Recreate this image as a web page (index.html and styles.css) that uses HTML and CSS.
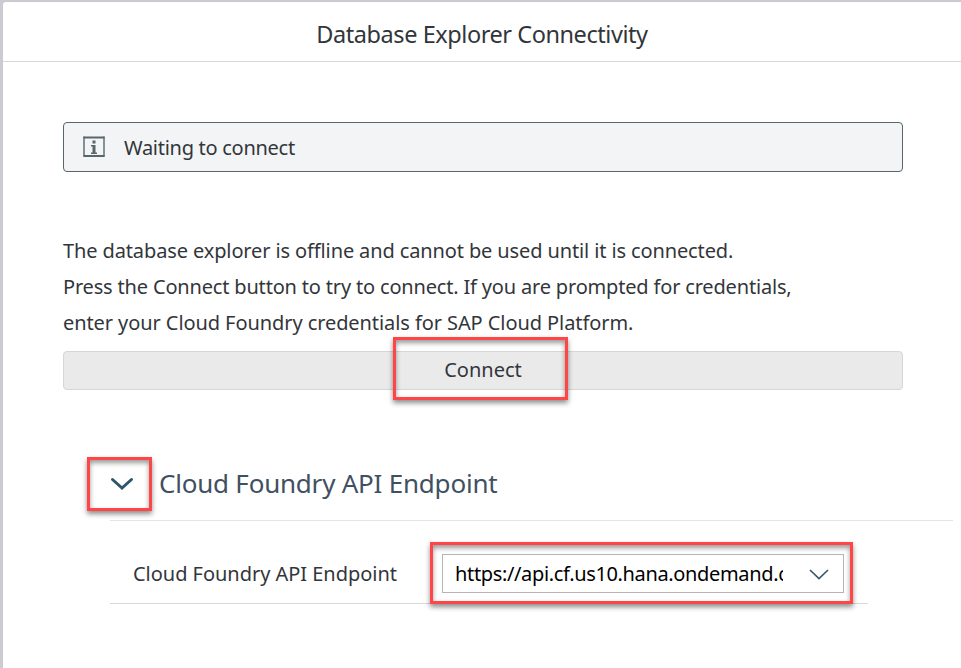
FILE: index.html
```html
<!DOCTYPE html>
<html lang="en">
<head>
<meta charset="utf-8">
<title>Database Explorer Connectivity</title>
<link rel="stylesheet" href="styles.css">
</head>
<body>
<main class="dialog">
  <header class="title"><h1>Database Explorer Connectivity</h1></header>
  <section class="content">
    <div class="strip">
      <svg class="info" viewBox="0 0 22 22" width="22" height="22"><path d="M1 .500v20M21 .500v20" stroke="#607078" stroke-width="1.500"/><path d="M.500 1.500h21M.500 20h21" stroke="#56666c" stroke-width="2"/><path d="M9.500 4.500h3v3h-3zM8 9h4.500v7.500H14V18H8v-1.500h1.500v-6H8z" fill="#56666c"/></svg>
      <span class="status">Waiting to connect</span>
    </div>
    <p class="message"><span class="l1">The database explorer is offline and cannot be used until it is connected.</span><br><span class="l2">Press the Connect button to try to connect. If you are prompted for credentials,</span><br><span class="l3">enter your Cloud Foundry credentials for SAP Cloud Platform.</span></p>
    <button class="connect"><span>Connect</span><i class="mark mark-connect"></i></button>
  </section>
  <section class="panel">
    <div class="panel-head">
      <button class="toggle"><svg width="24" height="14" viewBox="0 0 24 14"><path d="M2.500 2.500l9.500 8.500 9.500-8.500" fill="none" stroke="#2f566b" stroke-width="3" stroke-linecap="round"/></svg><i class="mark mark-toggle"></i></button>
      <h2>Cloud Foundry API Endpoint</h2>
    </div>
    <div class="row">
      <label>Cloud Foundry API Endpoint</label>
      <div class="select"><span class="value">https://api.cf.us10.hana.ondemand.com</span><svg width="20" height="12" viewBox="0 0 20 12"><path d="M1 2l9 8.500L19 2" fill="none" stroke="#36596e" stroke-width="1.700"/></svg><i class="mark mark-select"></i></div>
    </div>
  </section>
</main>
</body>
</html>
```
FILE: styles.css
```css
* { box-sizing: border-box; }
body { margin: 0; background: #caccd1; color: #32363a; font: 20px/36px "Noto Sans", sans-serif; overflow: hidden; }
h1, h2, p { margin: 0; font-weight: 400; }
button { font: inherit; color: inherit; padding: 0; }
.dialog { height: 666px; margin: 2px 0 0 3px; background: #fff; border-top-left-radius: 3px; box-shadow: 0 -1px 0 #c5c9ce; display: flow-root; }
.title { height: 60px; border-bottom: 1px solid #d9d9d9; text-align: center; }
.title h1 { font-size: 23.5px; line-height: 64px; letter-spacing: -.44px; }
.content { width: 840px; margin: 60px 0 0 60px; }
.strip { height: 50px; border: 1px solid #56666c; border-radius: 4px; background: #f3f4f6; display: flex; align-items: center; gap: 19px; padding-left: 19px; }
.info { margin-bottom: 1px; }
.status { letter-spacing: -.28px; padding-top: 2px; }
.message { margin-top: 61px; white-space: nowrap; }
.l1 { letter-spacing: -.12px; }
.l2 { letter-spacing: -.175px; }
.l3 { letter-spacing: -.08px; }
.connect { position: relative; display: block; margin-top: 10px; width: 840px; height: 39px; border: 1px solid #d6d6d6; border-radius: 4px; background: #eaeaea; line-height: 35px; padding-bottom: 2px; }
.mark { position: absolute; border: 3px solid #ff4545; box-shadow: 0 3px 5px rgba(0,0,0,.45), inset 0 3px 5px rgba(0,0,0,.4); }
.mark-connect { left: 329px; top: -15px; width: 175px; height: 63px; }
.panel { margin: 58px 0 0 107px; width: 843px; }
.panel-head { height: 73px; border-bottom: 1px solid #e5e5e5; display: flex; align-items: center; }
.toggle { position: relative; width: 24px; height: 36px; border: 0; background: none; }
.mark-toggle { left: -23px; top: -9px; width: 65px; height: 54px; }
h2 { margin: 0 0 2px 25px; font-size: 26px; letter-spacing: -.22px; color: #3f5161; white-space: nowrap; }
.row { width: 758px; height: 83px; border-bottom: 1px solid #d9d9d9; display: flex; padding: 33px 24px 0 23px; justify-content: space-between; white-space: nowrap; }
.row label { padding-top: 2px; letter-spacing: -.03px; }
.select { position: relative; width: 402px; height: 39px; border: 1px solid #b5b5b5; color: #000; display: flex; align-items: center; justify-content: space-between; padding: 0 14px 0 12px; }
.value { width: 328px; overflow: hidden; letter-spacing: -.35px; }
.mark-select { left: -13px; top: -13px; width: 423px; height: 62px; }
```
